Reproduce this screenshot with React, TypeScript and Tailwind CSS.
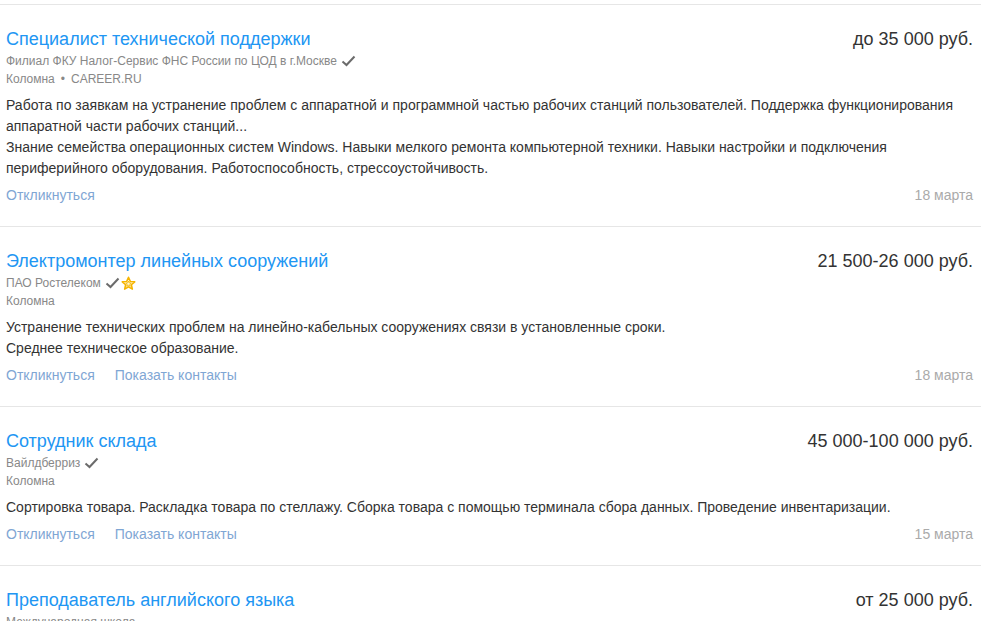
import React from 'react';

type Vacancy = {
  title: string;
  salary: string;
  company: string;
  verified?: boolean;
  starred?: boolean;
  location: string;
  source?: string;
  lines: string[];
  contacts?: boolean;
  date: string;
};

const vacancies: Vacancy[] = [
  {
    title: 'Специалист технической поддержки',
    salary: 'до 35 000 руб.',
    company: 'Филиал ФКУ Налог-Сервис ФНС России по ЦОД в г.Москве',
    verified: true,
    location: 'Коломна',
    source: 'CAREER.RU',
    lines: [
      'Работа по заявкам на устранение проблем с аппаратной и программной частью рабочих станций пользователей. Поддержка функционирования аппаратной части рабочих станций...',
      'Знание семейства операционных систем Windows. Навыки мелкого ремонта компьютерной техники. Навыки настройки и подключения периферийного оборудования. Работоспособность, стрессоустойчивость.',
    ],
    date: '18 марта',
  },
  {
    title: 'Электромонтер линейных сооружений',
    salary: '21 500-26 000 руб.',
    company: 'ПАО Ростелеком',
    verified: true,
    starred: true,
    location: 'Коломна',
    lines: [
      'Устранение технических проблем на линейно-кабельных сооружениях связи в установленные сроки.',
      'Среднее техническое образование.',
    ],
    contacts: true,
    date: '18 марта',
  },
  {
    title: 'Сотрудник склада',
    salary: '45 000-100 000 руб.',
    company: 'Вайлдберриз',
    verified: true,
    location: 'Коломна',
    lines: [
      'Сортировка товара. Раскладка товара по стеллажу. Сборка товара с помощью терминала сбора данных. Проведение инвентаризации.',
    ],
    contacts: true,
    date: '15 марта',
  },
  {
    title: 'Преподаватель английского языка',
    salary: 'от 25 000 руб.',
    company: 'Международная школа',
    location: 'Коломна',
    lines: ['Проведение занятий по английскому языку с детьми и взрослыми.'],
    contacts: true,
    date: '14 марта',
  },
];

const Check = () => (
  <svg width="15" height="12" viewBox="0 0 15 12" className="ml-[4px] inline-block">
    <path d="M1.5 6.5 L5.5 10 L13.5 1.5" fill="none" stroke="#6b6b6b" strokeWidth="2" />
  </svg>
);

const Star = () => (
  <svg width="15" height="15" viewBox="0 0 24 24" className="ml-[1px] inline-block">
    <polygon
      points="12,2 14.9,8.6 22,9.3 16.6,14 18.2,21 12,17.3 5.8,21 7.4,14 2,9.3 9.1,8.6"
      fill="#fff7d6"
      stroke="#f5b400"
      strokeWidth="2.4"
      strokeLinejoin="round"
    />
    <polygon
      points="12,8 13.3,11 16.5,11.3 14.1,13.4 14.8,16.5 12,14.9 9.2,16.5 9.9,13.4 7.5,11.3 10.7,11"
      fill="none"
      stroke="#f5b400"
      strokeWidth="1.4"
      strokeLinejoin="round"
    />
  </svg>
);

const VacancyCard = ({ v }: { v: Vacancy }) => (
  <div className="border-t border-[#e6e6e6] pl-[6px] pr-[8px] pt-[21px] pb-[21px]">
    <div className="flex items-start justify-between">
      <a className="text-[18px] leading-[26px] text-[#2196f3] cursor-pointer">{v.title}</a>
      <div className="text-[18px] leading-[26px] text-[#333]">{v.salary}</div>
    </div>
    <div className="flex items-center text-[12px] leading-[18px] text-[#888]">
      <span>{v.company}</span>
      {v.verified && <Check />}
      {v.starred && <Star />}
    </div>
    <div className="text-[12px] leading-[18px] text-[#888]">
      {v.location}
      {v.source && (
        <>
          <span className="mx-[6px]">•</span>
          {v.source}
        </>
      )}
    </div>
    <div className="mt-[7px] text-[14px] leading-[21px] text-[#333]">
      {v.lines.map((l, i) => (
        <div key={i}>{l}</div>
      ))}
    </div>
    <div className="mt-[6px] flex items-center justify-between text-[14px] leading-[20px]">
      <div className="flex gap-[20px] text-[#7fa6d4]">
        <a className="cursor-pointer">Откликнуться</a>
        {v.contacts && <a className="cursor-pointer">Показать контакты</a>}
      </div>
      <div className="text-[#aaa]">{v.date}</div>
    </div>
  </div>
);

export default function App() {
  return (
    <div className="min-h-screen bg-white pt-[4px] font-['Liberation_Sans',Arial,sans-serif]">
      {vacancies.map((v, i) => (
        <VacancyCard key={i} v={v} />
      ))}
    </div>
  );
}
